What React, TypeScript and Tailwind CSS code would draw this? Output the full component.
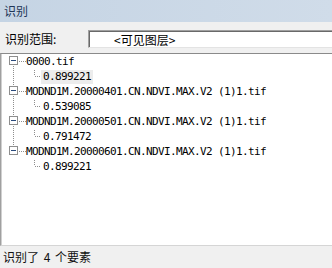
import React from "react";

const DOT = "#8e8e8e";
const TOP = 54;
const ROW = 15;

const groups = [
  { t: "0000.tif", v: "0.899221", sel: true },
  { t: "MODND1M.20000401.CN.NDVI.MAX.V2 (1)1.tif", v: "0.539085" },
  { t: "MODND1M.20000501.CN.NDVI.MAX.V2 (1)1.tif", v: "0.791472" },
  { t: "MODND1M.20000601.CN.NDVI.MAX.V2 (1)1.tif", v: "0.899221" },
];

function vDots(x: number, y0: number, y1: number, rowTop: number) {
  const out: React.ReactElement[] = [];
  for (let y = y0; y <= y1; y++) {
    if ((rowTop + y) % 2 === 0) out.push(<rect key={`v${x}-${y}`} x={x} y={y} width={1} height={1} fill={DOT} />);
  }
  return out;
}
function hDots(y: number, x0: number, x1: number) {
  const out: React.ReactElement[] = [];
  for (let x = x0; x <= x1; x++) {
    if (x % 2 === 1) out.push(<rect key={`h${y}-${x}`} x={x} y={y} width={1} height={1} fill={DOT} />);
  }
  return out;
}

const mono = { fontFamily: '"DejaVu Sans Mono", "Liberation Mono", monospace' };

function RootRow({ text, idx, last }: { text: string; idx: number; last: boolean }) {
  const rowTop = TOP + idx * ROW;
  return (
    <div className="flex h-[15px] items-center">
      <svg width={24} height={15} className="shrink-0">
        {idx > 0 && vDots(11, 0, 2, rowTop)}
        {!last && vDots(11, 12, 14, rowTop)}
        {hDots(7, 16, 23)}
        <rect x={7.5} y={2.5} width={8} height={8} fill="#ffffff" stroke="#8e8e8e" />
        <rect x={9} y={6} width={5} height={1} fill="#2a4a7c" />
      </svg>
      <span className="whitespace-pre text-[11px] leading-[15px] tracking-[-0.62px] text-black" style={mono}>
        {text}
      </span>
    </div>
  );
}

function ChildRow({ text, idx, lastGroup, sel }: { text: string; idx: number; lastGroup: boolean; sel?: boolean }) {
  const rowTop = TOP + idx * ROW;
  return (
    <div className="flex h-[15px] items-center">
      <svg width={39} height={15} className="shrink-0">
        {!lastGroup && vDots(11, 0, 14, rowTop)}
        {vDots(32, 0, 6, rowTop)}
        {hDots(7, 32, 38)}
      </svg>
      <span
        className={
          "whitespace-pre pl-[2px] pr-[2px] text-[11px] leading-[14px] tracking-[-0.62px] text-black " +
          (sel ? "bg-[#ececec]" : "")
        }
        style={mono}
      >
        {text}
      </span>
    </div>
  );
}

export default function App() {
  const cjk = { fontFamily: '"Noto Sans CJK SC", "Noto Sans", sans-serif' };
  return (
    <div className="flex h-[268px] w-[332px] flex-col overflow-hidden bg-[#f0f0f0]" style={cjk}>
      <div className="flex h-[22px] shrink-0 items-center bg-linear-to-r from-[#c5d4e4] to-[#d0dce9] pl-[4px] text-[12px] text-[#1e3658]">
        识别
      </div>
      <div className="flex h-[30px] shrink-0 items-start pt-[8px]">
        <div className="flex h-[18px] w-[88px] shrink-0 items-center pl-[5px] text-[12px] text-black">识别范围:</div>
        <div className="h-[18px] w-[300px] shrink-0 border-t border-l border-t-[#a0a0a0] border-l-[#a0a0a0] border-b border-b-[#e3e3e3]">
          <div className="flex h-full items-center border-t border-l border-t-[#696969] border-l-[#696969] bg-white pl-[24px] text-[12px] text-black">
            &lt;可见图层&gt;
          </div>
        </div>
      </div>
      <div className="mt-[1px] flex-1 border-t border-l border-t-[#8a8a8a] border-l-[#a0a0a0] border-b border-b-[#d5d5d5] bg-white">
        <div className="h-full border-l border-l-[#d0d0d0]">
          {groups.map((g, i) => (
            <React.Fragment key={i}>
              <RootRow text={g.t} idx={i * 2} last={i === groups.length - 1} />
              <ChildRow text={g.v} idx={i * 2 + 1} lastGroup={i === groups.length - 1} sel={g.sel} />
            </React.Fragment>
          ))}
        </div>
      </div>
      <div className="flex h-[22px] shrink-0 items-center pl-[3px] text-[12px] text-[#111] [word-spacing:2px]">识别了 4 个要素</div>
    </div>
  );
}
